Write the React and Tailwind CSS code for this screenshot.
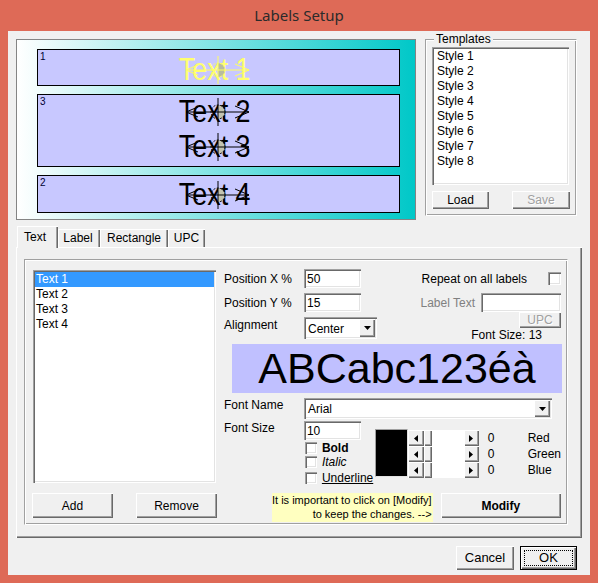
import React from "react";

const raised =
  "shadow-[inset_1px_1px_0_#ffffff,inset_-1px_-1px_0_#696969,inset_-2px_-2px_0_#a0a0a0]";
const sunken =
  "shadow-[inset_1px_1px_0_#a0a0a0,inset_2px_2px_0_#696969,inset_-1px_-1px_0_#ffffff,inset_-2px_-2px_0_#e3e3e3]";
const etched =
  "border border-t-[#a0a0a0] border-l-[#a0a0a0] border-r-white border-b-white shadow-[inset_1px_1px_0_#ffffff,inset_-1px_-1px_0_#a0a0a0]";

function Btn({ className = "", disabled, children, bold }) {
  return (
    <div
      className={`flex items-center justify-center bg-[#f0f0f0] ${raised} ${
        disabled ? "text-[#a0a0a0] [text-shadow:1px_1px_0_#ffffff]" : "text-black"
      } ${bold ? "font-bold" : ""} ${className}`}
    >
      {children}
    </div>
  );
}

function Marker({ color, fill }) {
  return (
    <svg
      width="70"
      height="30"
      viewBox="0 0 70 30"
      className="absolute left-[calc(50%-32px)] top-[calc(50%-14px)] pointer-events-none"
      fill="none"
      stroke={color}
      strokeWidth="1"
    >
      <path d="M35 8 A7 7 0 0 1 35 22 Z" fill={fill} stroke="none" />
      <circle cx="35" cy="15" r="7" strokeDasharray="2 1.5" />
      <path d="M35 1 V29" />
      <path d="M3 15 H66" />
      <path d="M15 10 L3 15 L15 20" />
      <path d="M52 9 L66 15 L52 21" />
    </svg>
  );
}

function LabelText({ children, color, mcolor, fill }) {
  return (
    <div className="relative inline-block">
      <span
        className="inline-block text-[32px] leading-[32px] scale-x-[0.84] whitespace-nowrap"
        style={{ color }}
      >
        {children}
      </span>
      <Marker color={mcolor} fill={fill} />
    </div>
  );
}

function LabelBox({ num, className, children }) {
  return (
    <div
      className={`relative w-[363px] border border-black bg-[#c8c8ff] flex flex-col items-center justify-center ${className}`}
    >
      <span className="absolute top-[2px] left-[2px] text-[10px] leading-[10px] text-[#000033]">
        {num}
      </span>
      {children}
    </div>
  );
}

function Preview() {
  return (
    <div className="w-[400px] h-[181px] border border-[#848484] bg-[linear-gradient(to_right,#ffffff,#00c8c8)] flex flex-col pl-[20px] pt-[9px]">
      <LabelBox num="1" className="h-[37px]">
        <div className="pr-[8px] pt-[2px]">
          <LabelText color="#ffff70" mcolor="#ffff60" fill="#b8bca0">
            Text 1
          </LabelText>
        </div>
      </LabelBox>
      <LabelBox num="3" className="h-[73px] mt-[8px] gap-[3px]">
        <div className="pr-[8px] -mt-[4px]">
          <LabelText color="#000000" mcolor="#000000" fill="#c4c4b0">
            Text 2
          </LabelText>
        </div>
        <div className="pr-[8px]">
          <LabelText color="#000000" mcolor="#000000" fill="#c4c4b0">
            Text 3
          </LabelText>
        </div>
      </LabelBox>
      <LabelBox num="2" className="h-[38px] mt-[8px]">
        <div className="pr-[8px]">
          <LabelText color="#000000" mcolor="#000000" fill="#c4c4b0">
            Text 4
          </LabelText>
        </div>
      </LabelBox>
    </div>
  );
}

function Templates() {
  const items = ["Style 1", "Style 2", "Style 3", "Style 4", "Style 5", "Style 6", "Style 7", "Style 8"];
  return (
    <div className={`relative ml-[9px] w-[152px] h-[177px] ${etched} pl-[6px] pt-[7px]`}>
      <span className="absolute -top-[8px] left-[8px] px-[2px] bg-[#f0f0f0]">Templates</span>
      <div className={`w-[137px] h-[138px] bg-white ${sunken} pt-[2px] pl-[5px]`}>
        {items.map((s) => (
          <div key={s} className="h-[15px] leading-[15px]">
            {s}
          </div>
        ))}
      </div>
      <div className="flex mt-[6px]">
        <Btn className="w-[57px] h-[18px]">Load</Btn>
        <Btn className="w-[58px] h-[18px] ml-[23px]" disabled>
          Save
        </Btn>
      </div>
    </div>
  );
}

function Tabs() {
  return (
    <div className="flex items-end h-[21px] mt-[6px] ml-[9px]">
      <div className="relative z-10 h-[22px] -mb-[1px] w-[41px] bg-[#f0f0f0] shadow-[inset_1px_1px_0_#ffffff,inset_-1px_0_0_#696969,inset_-2px_0_0_#a0a0a0] flex items-center pl-[7px] pb-[1px]">
        Text
      </div>
      <div className="h-[18px] w-[42px] shadow-[inset_1px_1px_0_#ffffff,inset_-1px_0_0_#696969,inset_-2px_0_0_#a0a0a0] flex items-center justify-center pr-[2px]">
        Label
      </div>
      <div className="h-[18px] w-[68px] shadow-[inset_1px_1px_0_#ffffff,inset_-1px_0_0_#696969,inset_-2px_0_0_#a0a0a0] flex items-center justify-center">
        Rectangle
      </div>
      <div className="h-[18px] w-[37px] shadow-[inset_1px_1px_0_#ffffff,inset_-1px_0_0_#696969,inset_-2px_0_0_#a0a0a0] flex items-center justify-center">
        UPC
      </div>
    </div>
  );
}

function Input({ className = "", children }) {
  return (
    <div className={`bg-white ${sunken} flex items-center pl-[3px] pt-[1px] ${className}`}>
      {children}
    </div>
  );
}

function Check({ className = "" }) {
  return <div className={`bg-white ${sunken} ${className}`} />;
}

function DownArrow() {
  return (
    <svg width="7" height="4" viewBox="0 0 7 4">
      <path d="M0 0 H7 L3.5 4 Z" fill="#000" />
    </svg>
  );
}

function Select({ className = "", children }) {
  return (
    <div className={`bg-white ${sunken} flex items-center pl-[4px] pr-[2px] ${className}`}>
      <span className="flex-1 pt-[1px]">{children}</span>
      <div className={`w-[16px] h-[calc(100%-4px)] bg-[#f0f0f0] ${raised} flex items-center justify-center`}>
        <DownArrow />
      </div>
    </div>
  );
}

function ScrollRow() {
  return (
    <div className="flex h-[16px] w-[71px]">
      <div className={`w-[16px] h-[16px] bg-[#f0f0f0] ${raised} flex items-center justify-center`}>
        <svg width="4" height="7" viewBox="0 0 4 7">
          <path d="M4 0 V7 L0 3.5 Z" fill="#000" />
        </svg>
      </div>
      <div className={`w-[8px] h-[16px] bg-[#f0f0f0] ${raised}`} />
      <div className="flex-1 h-[16px] bg-white" />
      <div className={`w-[15px] h-[16px] bg-[#f0f0f0] ${raised} flex items-center justify-center`}>
        <svg width="4" height="7" viewBox="0 0 4 7">
          <path d="M0 0 V7 L4 3.5 Z" fill="#000" />
        </svg>
      </div>
    </div>
  );
}

function Panel() {
  const list = ["Text 1", "Text 2", "Text 3", "Text 4"];
  return (
    <div className={`ml-[8px] w-[566px] h-[291px] ${raised} pt-[12px] pl-[8px]`}>
      <div className={`w-[544px] h-[266px] ${etched} flex`}>
        {/* left column */}
        <div className="w-[192px] pl-[7px] pt-[10px] flex flex-col">
          <div className={`ml-[1px] w-[183px] h-[213px] bg-white ${sunken} p-[2px]`}>
            {list.map((t, i) => (
              <div
                key={t}
                className={`h-[15px] leading-[15px] pl-[1px] ${
                  i === 0 ? "bg-[#3399ff] text-white" : ""
                }`}
              >
                {t}
              </div>
            ))}
          </div>
          <div className="flex mt-[10px]">
            <Btn className="w-[81px] h-[25px]">Add</Btn>
            <Btn className="w-[81px] h-[25px] ml-[23px]">Remove</Btn>
          </div>
        </div>

        {/* right column */}
        <div className="ml-[7px] w-[337px] pt-[9px] flex flex-col">
          <div className="flex items-center h-[19px]">
            <span className="w-[80px]">Position X %</span>
            <Input className="w-[57px] h-[19px]">50</Input>
            <div className="ml-auto flex items-center">
              <span>Repeat on all labels</span>
              <Check className="w-[13px] h-[13px] ml-[21px]" />
            </div>
          </div>
          <div className="flex items-center h-[19px] mt-[5px]">
            <span className="w-[80px]">Position Y %</span>
            <Input className="w-[57px] h-[19px]">15</Input>
            <div className="ml-auto flex items-center">
              <span className="text-[#808080]">Label Text</span>
              <Input className="w-[80px] h-[19px] ml-[6px]" />
            </div>
          </div>
          <div className="flex h-[30px]">
            <div className="flex items-start">
              <span className="w-[80px] mt-[6px]">Alignment</span>
              <Select className="w-[73px] h-[22px] mt-[5px]">Center</Select>
            </div>
            <div className="ml-auto flex flex-col items-end">
              <Btn className="w-[42px] h-[17px]" disabled>
                UPC
              </Btn>
              <span className="mr-[19px]">Font Size: 13</span>
            </div>
          </div>
          <div className="mt-[2px] ml-[8px] w-[330px] h-[49px] bg-[#c0c0ff] flex items-center justify-center text-[43px] leading-[49px] whitespace-nowrap">
            ABCabc123éà
          </div>
          <div className="flex items-start h-[21px] mt-[5px]">
            <span className="w-[80px]">Font Name</span>
            <Select className="w-[248px] h-[21px]">Arial</Select>
          </div>
          <div className="flex items-start mt-[2px]">
            <span className="w-[80px]">Font Size</span>
            <div className="w-[71px] flex flex-col">
              <Input className="w-[57px] h-[19px]">10</Input>
              <div className="flex items-center mt-[2px] h-[12px]">
                <Check className="w-[12px] h-[12px] ml-[1px]" />
                <span className="ml-[5px] font-bold">Bold</span>
              </div>
              <div className="flex items-center mt-[2px] h-[12px]">
                <Check className="w-[12px] h-[12px] ml-[1px]" />
                <span className="ml-[5px] italic">Italic</span>
              </div>
              <div className="flex items-center mt-[4px] h-[12px]">
                <Check className="w-[12px] h-[12px] ml-[1px]" />
                <span className="ml-[5px] underline whitespace-nowrap">Underline</span>
              </div>
            </div>
            <div className="mt-[8px] w-[33px] h-[48px] bg-black border border-t-[#a0a0a0] border-l-[#a0a0a0] border-r-[#e3e3e3] border-b-[#e3e3e3]" />
            <div className="mt-[9px] flex flex-col">
              <ScrollRow />
              <ScrollRow />
              <ScrollRow />
            </div>
            <div className="mt-[9px] ml-[9px] w-[40px] flex flex-col">
              <div className="h-[16px] flex items-center">0</div>
              <div className="h-[16px] flex items-center">0</div>
              <div className="h-[16px] flex items-center">0</div>
            </div>
            <div className="mt-[9px] flex flex-col">
              <div className="h-[16px] flex items-center">Red</div>
              <div className="h-[16px] flex items-center">Green</div>
              <div className="h-[16px] flex items-center">Blue</div>
            </div>
          </div>
          <div className="flex items-start mt-[9px]">
            <div className="ml-[48px] w-[161px] h-[29px] bg-[#ffffc0] flex flex-col items-end text-[11px] leading-[14px] pr-[1px] whitespace-nowrap">
              <div>It is important to click on [Modify]</div>
              <div>to keep the changes. --&gt;</div>
            </div>
            <Btn className="ml-[8px] w-[121px] h-[25px]" bold>
              Modify
            </Btn>
          </div>
        </div>
      </div>
    </div>
  );
}

export default function App() {
  return (
    <div className="w-[598px] h-[583px] bg-[#de6a57] flex flex-col overflow-hidden font-['Liberation_Sans',Arial,sans-serif] text-[12px] leading-[14px] text-black">
      <div className="h-[31px] flex items-center justify-center font-['Noto_Sans',sans-serif] text-[15px] text-[#2b2b2b] pb-[1px]">
        Labels Setup
      </div>
      <div className="ml-[8px] w-[582px] h-[544px] bg-[#f0f0f0] flex flex-col">
        <div className="flex items-start pt-[8px] pl-[8px]">
          <Preview />
          <Templates />
        </div>
        <Tabs />
        <Panel />
        <div className="flex justify-end mt-[8px] mr-[13px]">
          <Btn className="w-[58px] h-[24px] text-[13px]">Cancel</Btn>
          <div className="ml-[6px] w-[57px] h-[24px] border border-black bg-[#f0f0f0] shadow-[inset_1px_1px_0_#ffffff,inset_-1px_-1px_0_#696969,inset_-2px_-2px_0_#a0a0a0] p-[3px]">
            <div className="w-full h-full border border-dotted border-black flex items-center justify-center text-[13px]">
              OK
            </div>
          </div>
        </div>
      </div>
    </div>
  );
}
